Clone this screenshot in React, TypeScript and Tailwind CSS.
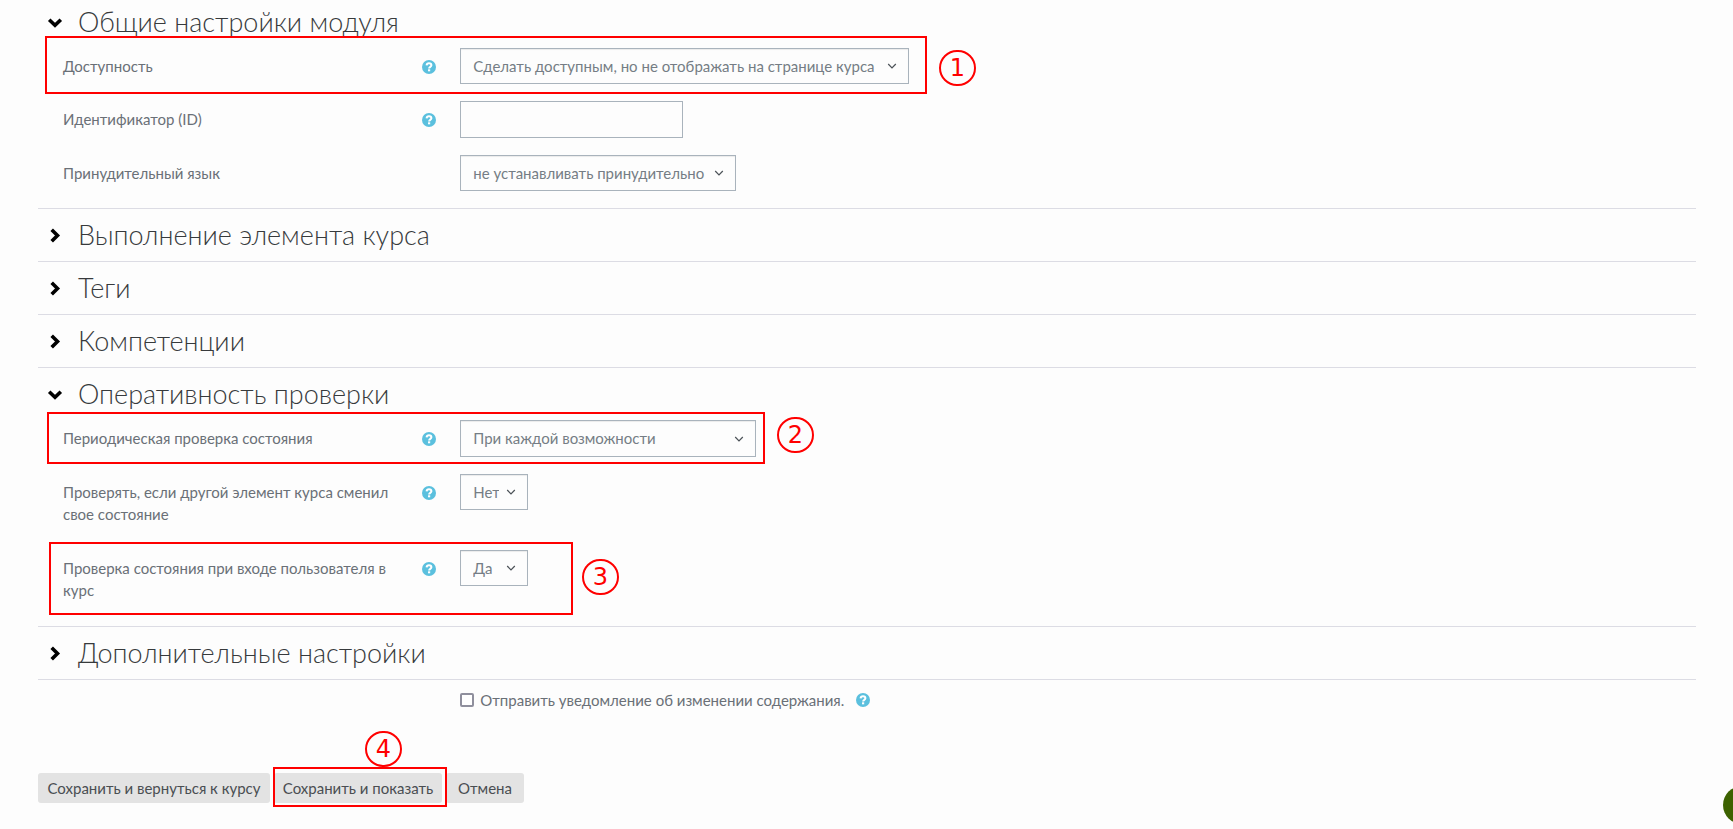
import type { ReactNode } from "react";

function Chevron({ open }: { open: boolean }) {
  return open ? (
    <svg className="h-4 w-4" viewBox="0 0 16 16" fill="none" stroke="#000" strokeWidth="3.6" aria-hidden="true">
      <path d="M2.2 5.7 8 11.300l5.8-5.600" />
    </svg>
  ) : (
    <svg className="h-4 w-4" viewBox="0 0 16 16" fill="none" stroke="#000" strokeWidth="3.6" aria-hidden="true">
      <path d="M4.700 2.700 10.500 8.500l-5.800 5.800" />
    </svg>
  );
}

function Help({ topic }: { topic: string }) {
  return (
    <button type="button" aria-label={`Справка: ${topic}`} className="block h-[14px] w-[14px] shrink-0">
      <svg className="h-[14px] w-[14px]" viewBox="0 0 14 14" aria-hidden="true">
        <circle cx="7" cy="7" r="7" fill="#5bc0de" />
        <path d="M4.600 5.400C4.700 4 5.700 3.300 7 3.300s2.400.8 2.400 2C9.400 6.900 7.100 6.800 7.100 8.500" fill="none" stroke="#fff" strokeWidth="2" />
        <rect x="6" y="9.300" width="2.200" height="2" fill="#fff" />
      </svg>
    </button>
  );
}

function Section({ title, open = false, children }: { title: string; open?: boolean; children?: ReactNode }) {
  return (
    <section className="border-b border-[#dcdce4]">
      <h3 className="h-[52px]">
        <button type="button" aria-expanded={open} className="flex h-full items-center gap-[15px] pb-px pl-[9px] text-[27px] font-light leading-8 text-[#373a3c]">
          <Chevron open={open} />
          {title}
        </button>
      </h3>
      {children}
    </section>
  );
}

function Row({ id, label, help = true, children }: { id: string; label: string; help?: boolean; children: ReactNode }) {
  return (
    <div className="relative mb-[17px] grid grid-cols-[1fr_3fr] gap-6 pl-[25px] pr-[116px]">
      <div className="flex items-start justify-between gap-6 pt-[7px]">
        <label htmlFor={id} className="leading-[22px]">{label}</label>
        {help && <span className="pt-[5px]"><Help topic={label} /></span>}
      </div>
      {children}
    </div>
  );
}

function Select({ id, options, className }: { id: string; options: string[]; className: string }) {
  return (
    <div className={`relative ${className}`}>
      <select id={id} className="h-full w-full appearance-none border border-[#a9b3bc] bg-[#fdfdfd] pl-3 pr-7 text-[#757d85] shadow-[inset_0_1px_1px_rgba(0,0,0,0.075)]">
        {options.map((o) => <option key={o}>{o}</option>)}
      </select>
      <svg className="pointer-events-none absolute right-3 top-1/2 h-[10px] w-[10px] -translate-y-1/2" viewBox="0 0 10 10" fill="none" stroke="#4b5157" strokeWidth="1.200" aria-hidden="true">
        <path d="M1.200 3 5 6.800 8.800 3" />
      </svg>
    </div>
  );
}

function Marker({ n, className }: { n: number; className: string }) {
  return (
    <span className={`absolute flex h-9 w-[37px] items-center justify-center rounded-full border-2 border-[#ff0000] font-['DejaVu_Sans',sans-serif] text-2xl leading-none text-[#ff0000] ${className}`}>
      {n}
    </span>
  );
}

function Frame({ className }: { className: string }) {
  return <span className={`pointer-events-none absolute border-2 border-[#ff0000] ${className}`} />;
}

const buttonClass = "h-[30px] rounded-[3px] bg-[#e3e3e3] text-[#4a4e52]";

export default function App() {
  return (
    <div className="min-h-screen overflow-hidden bg-[#fdfdfd] font-['Lato','Liberation_Sans',sans-serif] text-[15px] text-[#6a7077]">
      <form className="-mt-1 pb-[26px] pl-[38px] pr-[37px]" onSubmit={(e) => e.preventDefault()}>
        <Section title="Общие настройки модуля" open>
          <Row id="visible" label="Доступность">
            <Select id="visible" className="h-9 w-[449px]" options={["Сделать доступным, но не отображать на странице курса"]} />
            <Frame className="-top-3 left-[7px] h-[58px] w-[882px]" />
            <Marker n={1} className="left-[901px] top-[2px]" />
          </Row>
          <Row id="idnumber" label="Идентификатор (ID)">
            <input id="idnumber" type="text" className="h-[37px] w-[223px] border border-[#a9b3bc] bg-transparent px-3" />
          </Row>
          <Row id="lang" label="Принудительный язык" help={false}>
            <Select id="lang" className="h-9 w-[276px]" options={["не устанавливать принудительно"]} />
          </Row>
        </Section>
        <Section title="Выполнение элемента курса" />
        <Section title="Теги" />
        <Section title="Компетенции" />
        <Section title="Оперативность проверки" open>
          <Row id="periodic" label="Периодическая проверка состояния">
            <Select id="periodic" className="h-[37px] w-[296px]" options={["При каждой возможности"]} />
            <Frame className="-top-2 left-[9px] h-[52px] w-[718px]" />
            <Marker n={2} className="-top-[3px] left-[739px]" />
          </Row>
          <Row id="onchange" label="Проверять, если другой элемент курса сменил свое состояние">
            <Select id="onchange" className="mb-[23px] h-9 w-[68px]" options={["Нет", "Да"]} />
          </Row>
          <Row id="onlogin" label="Проверка состояния при входе пользователя в курс">
            <Select id="onlogin" className="mb-[23px] h-9 w-[68px]" options={["Да", "Нет"]} />
            <Frame className="-top-2 left-[11px] h-[73px] w-[524px]" />
            <Marker n={3} className="left-[544px] top-[9px]" />
          </Row>
        </Section>
        <Section title="Дополнительные настройки" />
        <div className="grid grid-cols-[1fr_3fr] gap-6 pl-[25px] pr-[116px] pt-[9px]">
          <div className="col-start-2 flex items-center">
            <input id="notify" type="checkbox" className="h-[14px] w-[14px] appearance-none rounded-[2px] border-2 border-[#8f8f9d] bg-white checked:bg-[#5bc0de]" />
            <label htmlFor="notify" className="ml-[6px] leading-[22px]">Отправить уведомление об изменении содержания.</label>
            <span className="ml-3"><Help topic="уведомление" /></span>
          </div>
        </div>
        <div className="mt-[62px] flex gap-1">
          <button type="submit" className={`${buttonClass} w-[232px]`}>Сохранить и вернуться к курсу</button>
          <span className="relative">
            <button type="submit" className={`${buttonClass} w-[168px]`}>Сохранить и показать</button>
            <Frame className="-left-px -top-[6px] z-10 h-10 w-[174px]" />
            <Marker n={4} className="-top-[42px] left-[91px]" />
          </span>
          <button type="button" className={`${buttonClass} w-[78px]`}>Отмена</button>
        </div>
      </form>
      <button type="button" aria-label="Помощь" className="fixed -right-7 bottom-[5px] h-[38px] w-[38px] rounded-full bg-[#3d6200]" />
    </div>
  );
}
